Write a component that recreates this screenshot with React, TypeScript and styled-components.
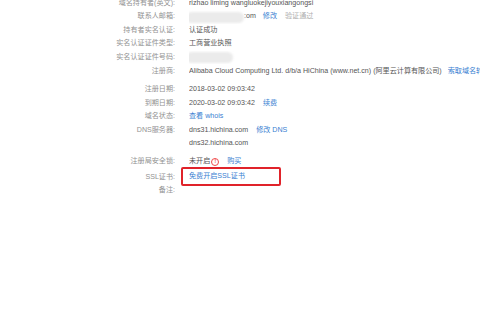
import React from 'react';
import styled, { createGlobalStyle } from 'styled-components';

const GlobalStyle = createGlobalStyle`
  html, body {
    margin: 0;
    padding: 0;
    background: #fff;
    overflow: hidden;
  }
  body {
    font-family: "Liberation Sans", Arial, "Noto Sans CJK SC", sans-serif;
    font-size: 7.1px;
    color: #555;
  }
`;

const Page = styled.div`
  width: 480px;
  height: 320px;
  overflow: hidden;
`;

const InfoList = styled.div`
  margin-top: -3px;
  display: grid;
  grid-template-columns: 175px 1fr;
  column-gap: 14px;
`;

const Label = styled.div<{ $gapTop?: number }>`
  height: 13.4px;
  line-height: 13.4px;
  text-align: right;
  color: #929292;
  white-space: nowrap;
  margin-top: ${(p) => p.$gapTop ?? 0}px;
`;

const Value = styled.div<{ $gapTop?: number }>`
  height: 13.4px;
  line-height: 13.4px;
  color: #555;
  white-space: nowrap;
  overflow: hidden;
  display: flex;
  align-items: center;
  margin-top: ${(p) => p.$gapTop ?? 0}px;
`;

const Link = styled.span<{ $gap?: number }>`
  color: #3a7fd2;
  margin-left: ${(p) => p.$gap ?? 0}px;
`;

const Muted = styled.span<{ $gap?: number }>`
  color: #b0b0b0;
  margin-left: ${(p) => p.$gap ?? 0}px;
`;

const Blur = styled.span<{ $w: number }>`
  display: inline-block;
  width: ${(p) => p.$w}px;
  height: 11px;
  margin-left: -3px;
  border-radius: 6px;
  background: #ebebeb;
  filter: blur(1.2px);
`;

const AlertDot = styled.span`
  display: inline-flex;
  align-items: center;
  justify-content: center;
  width: 6px;
  height: 6px;
  margin-left: 1px;
  border: 1px solid #f04848;
  border-radius: 50%;
  color: #f04848;
  font-size: 5px;
  line-height: 1;
  font-weight: bold;
`;

const SslBox = styled.div`
  box-sizing: border-box;
  margin-left: -8px;
  margin-top: -2px;
  width: 100px;
  height: 19px;
  border: 2px solid #e0232a;
  border-radius: 2px;
  display: flex;
  align-items: center;
  padding-left: 6px;
  color: #3a7fd2;
`;

const App: React.FC = () => {
  return (
    <Page>
      <GlobalStyle />
      <InfoList>
        <Label>域名持有者(英文):</Label>
        <Value>rizhao liming wangluokejiyouxiangongsi</Value>

        <Label>联系人邮箱:</Label>
        <Value>
          <Blur $w={58} />
          <span>:om</span>
          <Link $gap={7}>修改</Link>
          <Muted $gap={8}>验证通过</Muted>
        </Value>

        <Label>持有者实名认证:</Label>
        <Value>认证成功</Value>

        <Label>实名认证证件类型:</Label>
        <Value>工商营业执照</Value>

        <Label>实名认证证件号码:</Label>
        <Value>
          <Blur $w={47} />
        </Value>

        <Label $gapTop={1}>注册商:</Label>
        <Value $gapTop={1}>
          Alibaba Cloud Computing Ltd. d/b/a HiChina (www.net.cn) (阿里云计算有限公司)
          <Link $gap={6}>索取域名转移密码</Link>
        </Value>

        <Label $gapTop={5}>注册日期:</Label>
        <Value $gapTop={5}>2018-03-02 09:03:42</Value>

        <Label>到期日期:</Label>
        <Value>
          2020-03-02 09:03:42
          <Link $gap={8}>续费</Link>
        </Value>

        <Label>域名状态:</Label>
        <Value>
          <Link>查看 whois</Link>
        </Value>

        <Label>DNS服务器:</Label>
        <Value>
          dns31.hichina.com
          <Link $gap={8}>修改 DNS</Link>
        </Value>

        <Label />
        <Value>dns32.hichina.com</Value>

        <Label $gapTop={5}>注册局安全锁:</Label>
        <Value $gapTop={5}>
          未开启
          <AlertDot>!</AlertDot>
          <Link $gap={8}>购买</Link>
        </Value>

        <Label $gapTop={2}>SSL证书:</Label>
        <Value $gapTop={2} style={{ overflow: 'visible' }}>
          <SslBox>免费开启SSL证书</SslBox>
        </Value>

        <Label>备注:</Label>
        <Value />
      </InfoList>
    </Page>
  );
};

export default App;
